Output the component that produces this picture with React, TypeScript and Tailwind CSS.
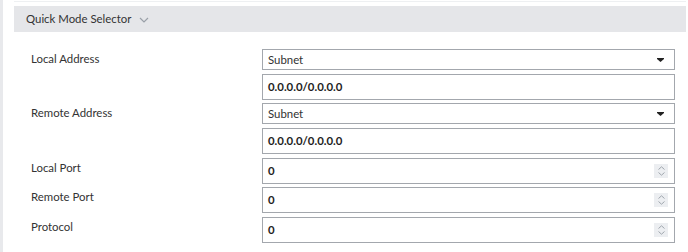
import React from "react";

const font = { fontFamily: "Lato, 'Open Sans', sans-serif" };

function Chevron() {
  return (
    <svg width="10" height="6" viewBox="0 0 10 6" className="ml-[8px] mt-[1px]">
      <path d="M1 1 L5 5 L9 1" fill="none" stroke="#9aa0a8" strokeWidth="1.2" />
    </svg>
  );
}

function SelectBox({ value }: { value: string }) {
  return (
    <div className="h-[21px] border border-[#a3a7ad] flex items-center justify-between pl-[5px] pr-[10px] text-[#333]">
      <span>{value}</span>
      <svg width="7" height="4" viewBox="0 0 7 4">
        <path d="M0 0 H7 V1 L3.5 4 L0 1 Z" fill="#222" />
      </svg>
    </div>
  );
}

function TextBox({ value }: { value: string }) {
  return (
    <div className="h-[26px] border border-[#a3a7ad] flex items-center pl-[5px] font-bold text-[#1e1e1e]">
      {value}
    </div>
  );
}

function NumberBox({ value }: { value: string }) {
  return (
    <div className="h-[26px] border border-[#a3a7ad] flex items-center justify-between pl-[5px] pr-[6px] font-bold text-[#1e1e1e]">
      <span>{value}</span>
      <span className="w-[14px] h-[14px] bg-[#eceef1] flex flex-col items-center justify-center gap-[2px]">
        <svg width="7" height="4" viewBox="0 0 7 4">
          <path d="M0.5 3.5 L3.5 0.8 L6.5 3.5" fill="none" stroke="#a0a6ad" strokeWidth="1" />
        </svg>
        <svg width="7" height="4" viewBox="0 0 7 4">
          <path d="M0.5 0.5 L3.5 3.2 L6.5 0.5" fill="none" stroke="#a0a6ad" strokeWidth="1" />
        </svg>
      </span>
    </div>
  );
}

function Row({ label, children, className = "" }: { label: string; children: React.ReactNode; className?: string }) {
  return (
    <div className={`grid grid-cols-[248px_413px] ${className}`}>
      <div className="pl-[17px] pt-[2px] text-[#333] leading-[16px]">{label}</div>
      <div className="flex flex-col">{children}</div>
    </div>
  );
}

export default function App() {
  return (
    <div className="w-[688px] h-[252px] bg-[#e8e9ec] pl-[3px] overflow-hidden text-[11.4px]" style={font}>
      <div className="bg-white h-full pl-[11px] pr-[2px]">
        <div className="h-[2px] border-b border-[#eef0f2]" />
        <div className="mt-[4px] h-[26px] bg-[#e5e6e9] flex items-center pl-[12px] text-[#333]">
          <span>Quick Mode Selector</span>
          <Chevron />
        </div>
        <Row label="Local Address" className="mt-[17px]">
          <SelectBox value="Subnet" />
          <div className="mt-[4px]">
            <TextBox value="0.0.0.0/0.0.0.0" />
          </div>
        </Row>
        <Row label="Remote Address" className="mt-[3px]">
          <SelectBox value="Subnet" />
          <div className="mt-[4px]">
            <TextBox value="0.0.0.0/0.0.0.0" />
          </div>
        </Row>
        <Row label="Local Port" className="mt-[4px]">
          <NumberBox value="0" />
        </Row>
        <Row label="Remote Port" className="mt-[3px]">
          <NumberBox value="0" />
        </Row>
        <Row label="Protocol" className="mt-[4px]">
          <NumberBox value="0" />
        </Row>
      </div>
    </div>
  );
}
